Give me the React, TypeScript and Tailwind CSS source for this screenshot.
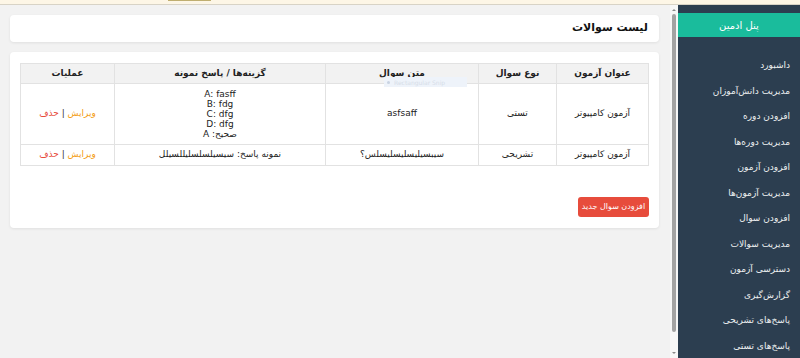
import React from 'react';

const menu = [
  'داشبورد',
  'مدیریت دانش‌آموزان',
  'افزودن دوره',
  'مدیریت دوره‌ها',
  'افزودن آزمون',
  'مدیریت آزمون‌ها',
  'افزودن سوال',
  'مدیریت سوالات',
  'دسترسی آزمون',
  'گزارش‌گیری',
  'پاسخ‌های تشریحی',
  'پاسخ‌های تستی',
];

const Actions = () => (
  <span>
    <span className="text-[#f39c12]">ویرایش</span>
    <span className="text-[#333]"> | </span>
    <span className="text-[#e74c3c]">حذف</span>
  </span>
);

export default function App() {
  return (
    <div className="w-[800px] h-[358px] overflow-hidden bg-[#f2f2f2] font-['DejaVu_Sans',sans-serif] text-[#222]">
      {/* browser notice strip */}
      <div className="relative h-[5px] bg-[#fdf6e6] border-b border-[#d8d3c6]">
        <div className="absolute left-[168px] top-0 w-[43px] h-[1px] bg-[#bfae70]" />
      </div>

      <div className="flex h-[353px]">
        {/* main */}
        <div dir="rtl" className="flex-1 flex flex-col gap-[10px] pt-[10px] pr-[11px] pl-[10px]">
          <div className="bg-white rounded-[4px] shadow-[0_1px_3px_rgba(0,0,0,0.08)] h-[27px] flex items-center px-[11px]">
            <h1 className="text-[11px] font-bold text-[#111]">لیست سوالات</h1>
          </div>

          <div className="relative bg-white rounded-[4px] shadow-[0_1px_3px_rgba(0,0,0,0.08)] pt-[11px] pb-[11px] px-[10px]">
            <table className="w-full border-collapse text-[9px] text-center">
              <thead>
                <tr className="bg-[#f2f2f2] h-[20px]">
                  <th className="border border-[#e2e2e2] font-bold w-[92px]">عنوان آزمون</th>
                  <th className="border border-[#e2e2e2] font-bold w-[78px]">نوع سوال</th>
                  <th className="border border-[#e2e2e2] font-bold w-[153px]">متن سوال</th>
                  <th className="border border-[#e2e2e2] font-bold w-[211px]">گزینه‌ها / پاسخ نمونه</th>
                  <th className="border border-[#e2e2e2] font-bold">عملیات</th>
                </tr>
              </thead>
              <tbody>
                <tr className="h-[61px]">
                  <td className="border border-[#e2e2e2]">آزمون کامپیوتر</td>
                  <td className="border border-[#e2e2e2]">تستی</td>
                  <td className="border border-[#e2e2e2]">asfsaff</td>
                  <td className="border border-[#e2e2e2] leading-[10px] py-[5px]">
                    <div>A: fasff</div>
                    <div>B: fdg</div>
                    <div>C: dfg</div>
                    <div>D: dfg</div>
                    <div>صحیح: A</div>
                  </td>
                  <td className="border border-[#e2e2e2]"><Actions /></td>
                </tr>
                <tr className="h-[21px]">
                  <td className="border border-[#e2e2e2]">آزمون کامپیوتر</td>
                  <td className="border border-[#e2e2e2]">تشریحی</td>
                  <td className="border border-[#e2e2e2]">سیبسیلیسلیسلیسلس؟</td>
                  <td className="border border-[#e2e2e2]">نمونه پاسخ: سیسیلسلسلیللسیلل</td>
                  <td className="border border-[#e2e2e2]"><Actions /></td>
                </tr>
              </tbody>
            </table>

            <div className="flex mt-[31px]">
              <button className="bg-[#e74c3c] text-white text-[8px] rounded-[3px] w-[71px] h-[20px]">
                افزودن سوال جدید
              </button>
            </div>

            {/* faint snip tooltip overlay */}
            <div dir="ltr" className="absolute left-[374px] top-[25px] w-[83px] h-[10px] bg-[#eef3fa] flex items-center gap-[4px] px-[3px] text-[6px] text-[#d6dde8]">
              <span className="w-[3px] h-[3px] rounded-full bg-[#c9d3e2]" />
              <span>Rectangular Snip</span>
            </div>
          </div>
        </div>

        {/* scrollbar */}
        <div className="w-[8px] bg-[#f7f7f7] flex flex-col items-center">
          <svg width="8" height="8" viewBox="0 0 8 8" className="mt-[1px]">
            <path d="M2 5 L4 3 L6 5 Z" fill="#8a8a8a" />
          </svg>
          <div className="w-[4px] h-[318px] rounded-[2px] bg-[#a3a3a3]" />
          <div className="flex-1" />
          <svg width="8" height="8" viewBox="0 0 8 8" className="mb-[1px]">
            <path d="M2 3 L4 5 L6 3 Z" fill="#8a8a8a" />
          </svg>
        </div>

        {/* sidebar */}
        <aside dir="rtl" className="w-[122px] bg-[#2c3e50] pt-[8px]">
          <div className="h-[24px] bg-[#1abc9c] flex items-center justify-center text-white text-[10px]">
            پنل ادمین
          </div>
          <ul className="pt-[16px] pr-[10px] text-[9px] text-[#ecf0f1]">
            {menu.map((m) => (
              <li key={m} className="h-[25.5px] flex items-center">{m}</li>
            ))}
          </ul>
        </aside>
      </div>
    </div>
  );
}
